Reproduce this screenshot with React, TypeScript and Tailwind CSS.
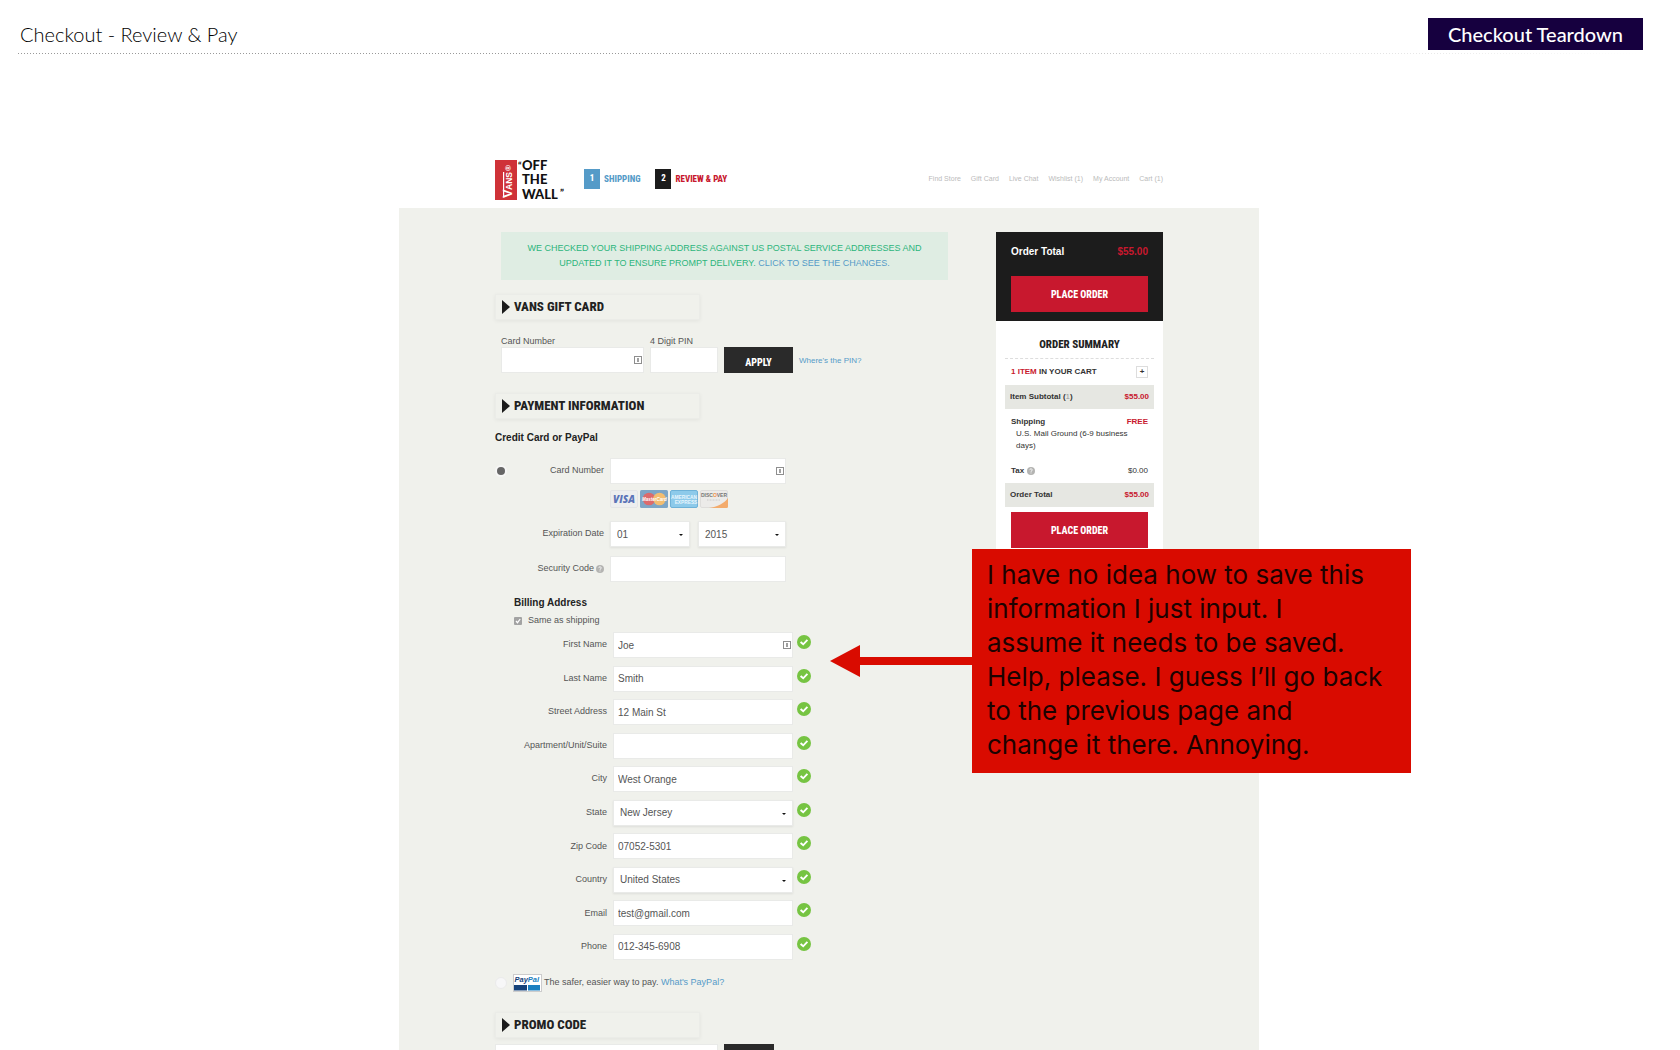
import React from "react";

const sans = "font-['Liberation_Sans',Arial,sans-serif]";
const narrow = "font-['Roboto_Condensed',Roboto,'DejaVu_Sans_Condensed',sans-serif]";

const inputBox =
  "h-full w-full border border-[#e9eae8] bg-white px-1 text-[10px] text-[#555] outline-none";

function Logo() {
  return (
    <svg viewBox="0 0 72 42" className="mt-2 h-[42px] w-[72px] shrink-0 overflow-visible" role="img" aria-label="Vans Off the Wall">
      <rect x="0" y="1" width="22" height="40" fill="#cf3238" />
      <g fill="#fff" transform="rotate(-90 11 21)" fontFamily="Liberation Sans" fontWeight="700">
        <text x="-7" y="27" fontSize="13">V</text>
        <text x="1" y="27" fontSize="8.500">ANS</text>
        <text x="20" y="26" fontSize="8">®</text>
        <rect x="-6" y="18" width="25" height="1.200" />
      </g>
      <g fill="#111" fontFamily="Lato" fontWeight="900" fontSize="13">
        <text x="23" y="10" fontSize="9">“</text>
        <text x="27" y="11">OFF</text>
        <text x="27" y="25">THE</text>
        <text x="27" y="40">WALL</text>
        <text x="65" y="37" fontSize="10">”</text>
      </g>
    </svg>
  );
}

function Step({ n, label, box, text }: { n: number; label: string; box: string; text: string }) {
  return (
    <li className="flex items-center gap-1">
      <span className={`${narrow} ${box} flex h-5 w-4 items-center justify-center text-[9px] font-extrabold text-white`}>{n}</span>
      <span className={`${narrow} ${text} pt-px text-[9px] font-extrabold`}>{label}</span>
    </li>
  );
}

function SectionTitle({ children, className = "" }: { children: React.ReactNode; className?: string }) {
  return (
    <h2
      className={`${narrow} ${className} flex h-[26px] w-[205px] items-center gap-1 border border-[#ebece8] pl-[6px] text-[13px] font-extrabold text-[#222] shadow-[0_1px_4px_rgba(0,0,0,0.06)]`}
    >
      <svg viewBox="0 0 8 14" className="h-[14px] w-2" aria-hidden="true">
        <path d="M0 0L8 7L0 14Z" fill="#1b1b1b" />
      </svg>
      {children}
    </h2>
  );
}

function KeyIcon() {
  return (
    <svg viewBox="0 0 8 8" className="absolute top-1/2 right-[2px] h-2 w-2 -translate-y-1/2" aria-hidden="true">
      <rect x="0.500" y="0.500" width="7" height="7" fill="#fff" stroke="#8e8e8e" />
      <path d="M4 2V6" stroke="#777" strokeWidth="1.400" fill="none" />
    </svg>
  );
}

function HelpIcon({ label }: { label: string }) {
  return (
    <button type="button" aria-label={label} className="flex">
      <svg viewBox="0 0 8 8" className="h-2 w-2" aria-hidden="true">
        <circle cx="4" cy="4" r="4" fill="#b4b4b2" />
        <path d="M2.800 3.100C2.800 1.400 5.300 1.500 5.200 3C5.200 3.900 4 3.900 4 4.800M4 5.500V6.400" stroke="#fff" strokeWidth="0.900" fill="none" />
      </svg>
    </button>
  );
}

function Select({ id, value, label }: { id: string; value: string; label?: string }) {
  return (
    <div className="relative h-full w-full">
      <select
        id={id}
        aria-label={label}
        defaultValue={value}
        className="h-full w-full appearance-none border border-[#e9eae8] bg-white pl-[6px] text-[10px] text-[#555] shadow-[0_1px_2px_rgba(0,0,0,0.08)] outline-none"
      >
        <option>{value}</option>
      </select>
      <svg viewBox="0 0 4 2" className="pointer-events-none absolute top-1/2 right-[7px] h-[2px] w-1" aria-hidden="true">
        <path d="M0 0H4L2 2Z" fill="#111" />
      </svg>
    </div>
  );
}

const cardSize = "h-[18px] w-7";

function CardLogos() {
  return (
    <div className="flex gap-[2px]">
      <svg viewBox="0 0 28 18" className={cardSize} role="img" aria-label="Visa">
        <rect x="0.500" y="0.500" width="27" height="17" rx="1.500" fill="#edeeef" stroke="#e4e5e6" />
        <text x="14" y="12.500" textAnchor="middle" fontFamily="Open Sans" fontWeight="800" fontStyle="italic" fontSize="10" fill="#5b74b8">VISA</text>
      </svg>
      <svg viewBox="0 0 28 18" className={cardSize} role="img" aria-label="MasterCard">
        <rect width="28" height="18" rx="1.500" fill="#7da5c6" />
        <circle cx="9" cy="9" r="6.300" fill="#dc6a6c" />
        <circle cx="19.500" cy="9" r="6.300" fill="#f3bd70" />
        <text x="14.500" y="11" textAnchor="middle" fontFamily="Liberation Sans" fontWeight="700" fontStyle="italic" fontSize="4.500" fill="#fff">MasterCard</text>
      </svg>
      <svg viewBox="0 0 28 18" className={cardSize} role="img" aria-label="American Express">
        <rect x="0.500" y="0.500" width="27" height="17" rx="1.500" fill="#8dcaea" stroke="#6eb2d8" />
        <g textAnchor="middle" fontFamily="Liberation Sans" fontWeight="700" fill="#e8f6fd">
          <text x="14" y="8.500" fontSize="4.800">AMERICAN</text>
          <text x="16" y="13.500" fontSize="4.800">EXPRESS</text>
        </g>
      </svg>
      <svg viewBox="0 0 28 18" className={cardSize} role="img" aria-label="Discover">
        <rect x="0.500" y="0.500" width="27" height="17" rx="1.500" fill="#ecebe9" stroke="#dedddb" />
        <path d="M28 8C25 13 17 17 9 18H26.500Q28 18 28 16.500Z" fill="#f3ab6c" />
        <text x="14" y="7" textAnchor="middle" fontFamily="Liberation Sans" fontWeight="700" fontSize="5" fill="#777">DISC<tspan fill="#f0914a">O</tspan>VER</text>
        <path d="M7 10H20" stroke="#ccc" strokeDasharray="1 0.500" />
      </svg>
    </div>
  );
}

function CheckBadge() {
  return (
    <svg viewBox="0 0 14 14" className="mb-[6px] ml-1 h-[14px] w-[14px] shrink-0" role="img" aria-label="Valid">
      <circle cx="7" cy="7" r="7" fill="#76c442" />
      <path d="M3.600 7L6.200 9.300L10.400 4.900" stroke="#fff" strokeWidth="1.900" fill="none" />
    </svg>
  );
}

const fields = [
  { id: "first", label: "First Name", value: "Joe", icon: true },
  { id: "last", label: "Last Name", value: "Smith" },
  { id: "street", label: "Street Address", value: "12 Main St" },
  { id: "apt", label: "Apartment/Unit/Suite", value: "" },
  { id: "city", label: "City", value: "West Orange" },
  { id: "state", label: "State", value: "New Jersey", select: true },
  { id: "zip", label: "Zip Code", value: "07052-5301" },
  { id: "country", label: "Country", value: "United States", select: true },
  { id: "email", label: "Email", value: "test@gmail.com" },
  { id: "phone", label: "Phone", value: "012-345-6908" },
];

const navLinks = ["Find Store", "Gift Card", "Live Chat", "Wishlist (1)", "My Account", "Cart (1)"];

function PlaceOrder() {
  return (
    <button type="button" className={`${narrow} flex h-9 w-full items-center justify-center bg-[#c8182e] text-[10px] font-extrabold text-white`}>
      PLACE ORDER
    </button>
  );
}

function OrderPanel() {
  return (
    <aside className="mt-6 w-[167px] shrink-0 self-start bg-white">
      <div className="h-[89px] bg-[#1c1c1c] px-[15px] pt-[14px]">
        <div className="flex items-center justify-between text-[10px] leading-3 font-bold text-white">
          <span>Order Total</span>
          <span className="text-[#c8182e]">$55.00</span>
        </div>
        <div className="mt-[18px]">
          <PlaceOrder />
        </div>
      </div>
      <div className="px-[9px] pb-4 text-[8px] text-[#333]">
        <h3 className={`${narrow} flex h-[38px] items-center justify-center border-b border-dashed border-[#ddd] pt-3 text-[11px] font-extrabold text-[#222]`}>
          ORDER SUMMARY
        </h3>
        <div className="flex h-[26px] items-center justify-between px-[6px] font-bold">
          <span>
            <span className="text-[#c8182e]">1 ITEM</span> IN YOUR CART
          </span>
          <button type="button" aria-label="Show items" className="flex h-3 w-3 items-center justify-center border border-[#ddd] text-[8px] font-bold">
            +
          </button>
        </div>
        <div className="flex h-6 items-center justify-between bg-[#e6e7e2] px-[5px] font-bold">
          <span>
            Item Subtotal (<span className="font-normal text-[#999]">1</span>)
          </span>
          <span className="text-[#c8182e]">$55.00</span>
        </div>
        <div className="flex justify-between px-[6px] pt-[7px] leading-3 font-bold">
          <span>Shipping</span>
          <span className="text-[#c8182e]">FREE</span>
        </div>
        <p className="pr-6 pl-[11px] leading-3">U.S. Mail Ground (6-9 business days)</p>
        <div className="flex h-[31px] items-center justify-between px-[6px] pt-[7px]">
          <span className="flex items-center gap-[3px] font-bold">
            Tax <HelpIcon label="About tax" />
          </span>
          <span>$0.00</span>
        </div>
        <div className="flex h-6 items-center justify-between bg-[#e6e7e2] px-[5px] font-bold">
          <span>Order Total</span>
          <span className="text-[#c8182e]">$55.00</span>
        </div>
        <div className="px-[6px] pt-[5px]">
          <PlaceOrder />
        </div>
      </div>
    </aside>
  );
}

function PaymentForm() {
  return (
    <form className="w-[453px] pt-6 text-[9px] text-[#555]">
      <p className="ml-[6px] h-12 bg-[#dfede3] px-4 pt-[9px] text-center text-[9px] leading-[15px] text-[#2cb57c]">
        WE CHECKED YOUR SHIPPING ADDRESS AGAINST US POSTAL SERVICE ADDRESSES AND
        <br />
        UPDATED IT TO ENSURE PROMPT DELIVERY.{" "}
        <a href="#changes" className="text-[#559bc8]">CLICK TO SEE THE CHANGES.</a>
      </p>

      <SectionTitle className="mt-[14px]">VANS GIFT CARD</SectionTitle>
      <div className="mt-[15px] ml-[6px] flex items-end gap-[6px]">
        <div className="w-[143px]">
          <label htmlFor="gift" className="block leading-3">Card Number</label>
          <div className="relative h-[26px]">
            <input id="gift" className={inputBox} />
            <KeyIcon />
          </div>
        </div>
        <div className="w-[68px]">
          <label htmlFor="pin" className="block leading-3">4 Digit PIN</label>
          <div className="h-[26px]">
            <input id="pin" className={inputBox} />
          </div>
        </div>
        <button type="button" className={`${narrow} h-[26px] w-[69px] bg-[#2a2a2a] pt-1 text-[10px] font-extrabold text-white`}>APPLY</button>
        <a href="#pin" className="pb-[7px] text-[8px] leading-[10px] text-[#559bc8]">Where's the PIN?</a>
      </div>

      <SectionTitle className="mt-5">PAYMENT INFORMATION</SectionTitle>
      <h3 className="mt-3 text-[10px] leading-[14px] font-bold text-[#222]">Credit Card or PayPal</h3>

      <div className="mt-[13px] flex h-[26px] items-center">
        <input type="radio" name="pay" defaultChecked aria-label="Credit card" className="ml-[2px] h-2 w-2 appearance-none rounded-full bg-[#aaa] ring-2 ring-[#f7f7f6] checked:bg-[#666]" />
        <label htmlFor="card" className="flex-1 text-right">Card Number</label>
        <div className="relative mr-[162px] ml-[6px] h-full w-[176px]">
          <input id="card" className={inputBox} />
          <KeyIcon />
        </div>
      </div>
      <div className="mt-[6px] ml-[115px]">
        <CardLogos />
      </div>
      <div className="mt-[13px] flex h-[26px] items-center">
        <label htmlFor="month" className="w-[109px] text-right">Expiration Date</label>
        <div className="ml-[6px] h-full w-[80px]">
          <Select id="month" value="01" />
        </div>
        <div className="ml-2 h-full w-[88px]">
          <Select id="year" label="Expiration year" value="2015" />
        </div>
      </div>
      <div className="mt-[9px] flex h-[26px] items-center">
        <div className="flex w-[109px] items-center justify-end gap-[2px]">
          <label htmlFor="code">Security Code</label>
          <HelpIcon label="About security code" />
        </div>
        <div className="ml-[6px] h-full w-[176px]">
          <input id="code" className={inputBox} />
        </div>
      </div>

      <h3 className="mt-[14px] ml-[19px] text-[10px] leading-[14px] font-bold text-[#222]">Billing Address</h3>
      <label className="mt-[3px] ml-[19px] flex h-4 items-center gap-[6px]">
        <span className="relative flex h-2 w-2">
          <input type="checkbox" defaultChecked className="h-2 w-2 appearance-none rounded-[1px] bg-[#a3a3a3]" />
          <svg viewBox="0 0 8 8" className="pointer-events-none absolute inset-0 h-2 w-2" aria-hidden="true">
            <path d="M2 4L3.500 5.700L6.200 2" stroke="#fff" strokeWidth="1.200" fill="none" />
          </svg>
        </span>
        Same as shipping
      </label>

      <div className="mt-[3px] flex h-[328px] flex-col justify-between">
        {fields.map((f) => (
          <div key={f.id} className="flex h-[26px] items-center">
            <label htmlFor={f.id} className="w-[112px] text-right">{f.label}</label>
            <div className="relative ml-[6px] h-full w-[180px]">
              {f.select ? <Select id={f.id} value={f.value} /> : <input id={f.id} defaultValue={f.value} className={inputBox} />}
              {f.icon && <KeyIcon />}
            </div>
            <CheckBadge />
          </div>
        ))}
      </div>

      <div className="mt-[14px] flex h-[18px] items-center">
        <input type="radio" name="pay" aria-label="PayPal" className="h-3 w-3 appearance-none rounded-full border border-[#ebebeb] bg-[#f7f7f8] checked:bg-[#666]" />
        <svg viewBox="0 0 29 18" className="ml-[6px] h-[18px] w-[29px]" role="img" aria-label="PayPal">
          <rect x="0.500" y="0.500" width="28" height="17" fill="#fff" stroke="#ccc" />
          <text x="1.500" y="8" fontFamily="Liberation Sans" fontWeight="700" fontStyle="italic" fontSize="7.500" fill="#17437a">Pay<tspan fill="#1b7fc0">Pal</tspan></text>
          <rect x="1" y="11" width="13" height="5.500" fill="#17437a" />
          <rect x="15" y="11" width="12" height="5.500" fill="#1b7fc0" />
        </svg>
        <span className="ml-[2px]">
          The safer, easier way to pay. <a href="#paypal" className="text-[#559bc8]">What's PayPal?</a>
        </span>
      </div>

      <SectionTitle className="mt-5">PROMO CODE</SectionTitle>
      <div className="mt-[6px] flex h-10 gap-[6px]">
        <div className="w-[223px]">
          <input aria-label="Promo code" className={inputBox} />
        </div>
        <button type="button" className={`${narrow} w-[50px] bg-[#2a2a2a] text-[10px] font-extrabold text-white`} aria-label="Apply promo code" />
      </div>
    </form>
  );
}

function Callout() {
  return (
    <div className="absolute top-[341px] left-[431px] flex items-start">
      <svg viewBox="0 0 142 32" className="mt-24 h-8 w-[142px]" aria-hidden="true">
        <path d="M0 16L30 0V12H142V20H30V32Z" fill="#d90b00" />
      </svg>
      <p className="w-[439px] bg-[#d90b00] px-[15px] pt-[9px] pb-[11px] font-['Inter',sans-serif] text-[26px] leading-[34px] whitespace-nowrap text-[#1c0200]">
        I have no idea how to save this
        <br />
        information I just input. I<br />
        assume it needs to be saved.
        <br />
        Help, please. I guess I’ll go back
        <br />
        to the previous page and
        <br />
        change it there. Annoying.
      </p>
    </div>
  );
}

export default function App() {
  return (
    <div className={`${sans} h-screen overflow-hidden bg-white`}>
      <header className="relative mr-[37px] ml-[18px] flex h-[54px] items-start justify-between pt-[14px]">
        <h1 className="pl-[2px] font-['Lato',sans-serif] text-[20px] leading-10 font-light text-black">Checkout - Review &amp; Pay</h1>
        <span className="mt-1 flex h-8 w-[215px] items-center justify-center bg-[#16003f] font-['Lato',sans-serif] text-[20px] font-medium text-white">Checkout Teardown</span>
        <div className="absolute inset-x-0 bottom-0 h-px bg-[repeating-linear-gradient(to_right,#999_0_1px,transparent_1px_3px)] [mask-image:linear-gradient(to_right,black_40%,transparent)]" />
      </header>

      <div className="pt-[97px] pr-[22px]">
        <div className="mx-auto max-w-[860px]">
          <div className="flex h-[57px] items-start pr-24 pl-24">
            <Logo />
            <ol className="mt-[18px] ml-[17px] flex gap-[15px]">
              <Step n={1} label="SHIPPING" box="bg-[#559bc8]" text="text-[#559bc8]" />
              <Step n={2} label="REVIEW & PAY" box="bg-[#1c1c1c]" text="text-[#c8182e]" />
            </ol>
            <nav className="mt-[23px] ml-auto flex gap-[10px] text-[7px] leading-[10px] text-[#bbb]">
              {navLinks.map((l) => (
                <a key={l} href="#nav">{l}</a>
              ))}
            </nav>
          </div>
          <main className="relative flex justify-between bg-[#f0f1ec] px-24 pb-6">
            <PaymentForm />
            <OrderPanel />
            <Callout />
          </main>
        </div>
      </div>
    </div>
  );
}
